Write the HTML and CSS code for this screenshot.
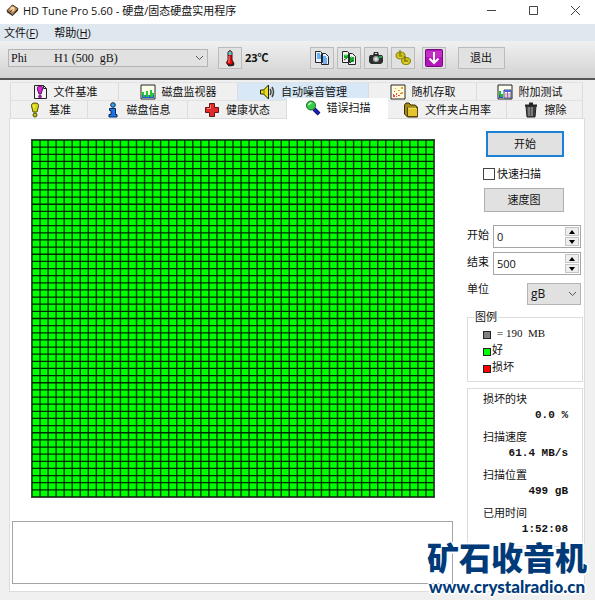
FILE: index.html
```html
<!DOCTYPE html>
<html lang="zh-CN">
<head>
<meta charset="utf-8">
<meta name="viewport" content="width=device-width, initial-scale=1">
<title>HD Tune Pro 5.60</title>
<link rel="stylesheet" href="styles.css">
</head>
<body>
<header class="titlebar">
  <svg class="app-icon" viewBox="0 0 14 14" aria-hidden="true"><path d="M1 7 7 1l6 4-6 7z" fill="#b58a58" stroke="#33261c"/><path d="M1 7v2l6 4 6-6V5l-6 7z" fill="#2c2825"/><circle cx="7" cy="5.500" r="2.500" fill="#ffd9a0"/><path d="m4 9 3-3" stroke="#4a3320"/></svg>
  <h1 class="title">HD Tune Pro 5.60 - 硬盘/固态硬盘实用程序</h1>
  <div class="window-buttons">
    <button type="button" aria-label="最小化"><svg viewBox="0 0 11 11"><path d="M1 5.500h9"/></svg></button>
    <button type="button" aria-label="最大化"><svg viewBox="0 0 11 11"><path d="M1.500 1.500h8v8h-8z"/></svg></button>
    <button type="button" aria-label="关闭"><svg viewBox="0 0 11 11"><path d="m1 1 9 9M10 1l-9 9"/></svg></button>
  </div>
</header>
<nav class="menubar">
  <button type="button">文件(<u>F</u>)</button>
  <button type="button">帮助(<u>H</u>)</button>
</nav>
<div class="toolbar">
  <div class="select drive">
    <select aria-label="驱动器"><option>Phi &nbsp; &nbsp; &nbsp; &nbsp; H1 (500 &nbsp;gB)</option></select>
    <svg class="chevron" viewBox="0 0 9 6" aria-hidden="true"><path d="m1 1 3.500 3.500L8 1"/></svg>
  </div>
  <button class="tool" type="button" aria-label="温度"><svg viewBox="0 0 18 18"><path d="M7 3q2-3 4 0v8q3 3 0 5H7q-3-2 0-5z" fill="#e00808" stroke="#301010"/><path d="M7.500 2.500h3V6h-3z" fill="#43d3dc"/><path d="M8 7v7" stroke="#ff8a8a"/><path d="M12 13.500q2 3-2 3H7" fill="none" stroke="#222" stroke-width="1.500"/></svg></button>
  <output class="temperature">23℃</output>
  <div class="tool-group">
    <button class="tool" type="button" aria-label="复制文本"><svg viewBox="0 0 18 18"><path d="M2.500 2.500h5l2 2v9h-7zM8.500 4.500h4l3 3v8h-7z" fill="#e7f3ff" stroke="#262626"/><path d="M4 5h3M4 7h4M4 9h4M10 8h3M10 10h4M10 12h4" stroke="#3f9dee" stroke-width="1.500"/><path d="M10 14h4" stroke="#345bd2"/></svg></button>
    <button class="tool" type="button" aria-label="复制图像"><svg viewBox="0 0 18 18"><path d="M2.500 2.500h5l2 2v9h-7zM8.500 4.500h4l3 3v8h-7z" fill="#eee" stroke="#262626"/><path d="M4 6h4v3H4zM10 8h4v5h-4z" fill="#17a82c"/><path d="m4 11 3-2M10 14l3-3" stroke="#164e22"/><path d="M5 6h2M11 8h1" stroke="#4ff270" stroke-width="1.500"/></svg></button>
    <button class="tool" type="button" aria-label="截图"><svg viewBox="0 0 18 18"><path d="M3 6h3l1-3h4l1 3h3l1 2v5l-2 2H4l-2-2V8z" fill="#2d302f"/><path d="M8 4h2v1H8z" fill="#eee"/><circle cx="9" cy="10" r="3" fill="#a8aeab"/><circle cx="9" cy="10" r="1.500" fill="#dfe5e2"/><path d="M12 7h3v2h-3z" fill="#20a546"/></svg></button>
    <button class="tool" type="button" aria-label="选项"><svg viewBox="0 0 18 18"><ellipse cx="6.500" cy="6.500" rx="4.500" ry="3.500" fill="#cdc114" stroke="#8a8010"/><ellipse cx="12" cy="12" rx="4.500" ry="3.500" fill="#cdc114" stroke="#8a8010"/><path d="M6 1v5M11 7v5" stroke="#6b6209"/><path d="M4 8h4M10 14h4" stroke="#eee34b"/><path d="M5 7h3M10 12h4" stroke="#6b6209"/></svg></button>
  </div>
  <button class="tool" type="button" aria-label="保存"><svg viewBox="0 0 18 18"><rect x=".5" y=".5" width="17" height="17" rx="1" fill="#b216b8" stroke="#790783"/><path d="M1 2h16v6H1z" fill="#cf48d1" opacity=".5"/><path d="M9 3v11M4.500 9.500 9 14l4.500-4.500" fill="none" stroke="#fff" stroke-width="2"/></svg></button>
  <button class="tool exit" type="button">退出</button>
</div>
<main class="window-body">
  <div class="tabs" role="tablist">
    <div class="tab-row upper">
      <button type="button" role="tab"><svg viewBox="0 0 16 16"><path d="M2.500 1.500h9l3 3v10h-12z" fill="#f5f5f5" stroke="#222"/><path d="M11.500 1.500v3h3" fill="none" stroke="#222"/><path d="M8 2q4 0 2 5L9 10H7L6 7Q4 2 8 2z" fill="#dc24dc" stroke="#55105a"/><circle cx="8" cy="12.500" r="1.500" fill="#b010b5" stroke="#401040" stroke-width=".5"/></svg>文件基准</button>
      <button type="button" role="tab"><svg viewBox="0 0 16 16"><path d="M1 1h14v14H1z" fill="#fbffe8" stroke="#272727"/><path d="M2 14V8h2v3h2V7h2v4h2V6h2v3h2v5z" fill="#24c932"/><path d="M2 14v-3h1v2h2v-2h1v2h3v-2h1v2h3v-2h1v3z" fill="#245be0"/></svg>磁盘监视器</button>
      <button class="hover" type="button" role="tab"><svg viewBox="0 0 16 16"><path d="M1.500 6h3l5-5v14l-5-5h-3z" fill="#e9df21" stroke="#262400"/><path d="M5 6v4" stroke="#7f7611"/><path d="M11 5q2 3 0 6M13 3q3 5 0 10" fill="none" stroke="#444" stroke-width="1.500"/></svg>自动噪音管理</button>
      <button type="button" role="tab"><svg viewBox="0 0 16 16"><path d="M1 1h14v14H1z" fill="#fffadb" stroke="#292929"/><path d="M3 11h2v2H3zM6 9h1v2H6zM8 11h2v1H8zM4 7h1v1H4z" fill="#e94b37"/><path d="M8 6h2v1H8zM11 3h2v2h-2zM11 8h2v2h-2zM5 4h1v1H5z" fill="#e5a628"/><path d="M3 10h1v1H3zM6 12h1v1H6zM10 9h1v1h-1z" fill="#c056c4"/></svg>随机存取</button>
      <button type="button" role="tab"><svg viewBox="0 0 16 16"><path d="M1 1h14v14H1z" fill="#f8fff0" stroke="#222"/><path d="M2 14V7h2v3h2v4z" fill="#20bd38"/><path d="M2 14v-3h1v2h3v1z" fill="#244be0"/><path d="M7 6h7v8H7z" fill="#fff" stroke="#41406e"/><path d="M7 6h7v2H7z" fill="#5263d8"/><path d="M8 10h5M8 12h5" stroke="#d57a9f"/><path d="M10.500 8v6" stroke="#8875b0"/></svg>附加测试</button>
    </div>
    <div class="tab-row lower">
      <button type="button" role="tab"><svg viewBox="0 0 16 16"><path d="M8 1q5 0 3 5l-1 4H6L5 6Q3 1 8 1z" fill="#d8d51d" stroke="#4e4c06"/><path d="M7 3v3" stroke="#fff88b"/><circle cx="8" cy="13" r="2" fill="#c6c112" stroke="#4e4c06"/></svg>基准</button>
      <button type="button" role="tab"><svg viewBox="0 0 16 16"><circle cx="8" cy="3" r="2.300" fill="#2da8e8" stroke="#102a50"/><path d="M4.500 6.500h6v6H12v2.500H4v-2.500h2v-4H4.500z" fill="#1680ef" stroke="#0c2453"/><path d="M8 8v6" stroke="#1a6fe8" stroke-width="2"/></svg>磁盘信息</button>
      <button type="button" role="tab"><svg viewBox="0 0 16 16"><path d="M5.500 1.500h5v4h4v5h-4v4h-5v-4h-4v-5h4z" fill="#e12b2b" stroke="#661515"/><path d="M6.500 3v3.500H3" stroke="#ff7b6e" fill="none"/></svg>健康状态</button>
      <button class="active" type="button" role="tab" aria-selected="true"><svg viewBox="0 0 16 16"><path d="m9 9 5 5" stroke="#101060" stroke-width="4"/><path d="m9 9 5 5" stroke="#1722cf" stroke-width="2"/><circle cx="6" cy="5.500" r="4.500" fill="#35ce48" stroke="#245a2b"/><path d="M3.500 5q1-2 3-2" stroke="#bbffc0" stroke-width="1.500" fill="none"/></svg>错误扫描</button>
      <button type="button" role="tab"><svg viewBox="0 0 16 16"><path d="M1.500 3v9l3 3h10V5L12 3H8L6 1H3z" fill="#a68913" stroke="#393006"/><path d="M4.500 5.500h10v9h-10z" fill="#e4c52d" stroke="#574707"/><path d="M5 6h8" stroke="#fff17e"/></svg>文件夹占用率</button>
      <button type="button" role="tab"><svg viewBox="0 0 16 16"><path d="M3 4h10l-1 11H4z" fill="#515151" stroke="#202020"/><path d="M2 3.500h12M6 1.500h4" stroke="#242424" stroke-width="2"/><path d="M6 5v9M9 5v9" stroke="#a8a8a8"/><path d="M11 5v9" stroke="#222"/></svg>擦除</button>
    </div>
  </div>
  <section class="panel" role="tabpanel" aria-label="错误扫描">
    <div class="scan">
      <svg class="block-map" viewBox="0 0 50 50" preserveAspectRatio="none" role="img" aria-label="扫描块">
        <rect width="50" height="50" fill="#00ff00"/>
        <path class="columns" d="M0 25h50"/>
        <path class="rows" d="M25 0v50"/>
      </svg>
      <textarea class="log" aria-label="扫描记录" readonly></textarea>
    </div>
    <aside class="controls">
      <button class="push primary" type="button">开始</button>
      <label class="check"><input type="checkbox">快速扫描</label>
      <button class="push" type="button">速度图</button>
      <div class="range">
        <label for="start">开始</label>
        <div class="spinner"><input id="start" type="text" inputmode="numeric" value="0"><button type="button" aria-label="增加开始值"><svg viewBox="0 0 6 4"><path d="m0 4 3-4 3 4z"/></svg></button><button type="button" aria-label="减少开始值"><svg viewBox="0 0 6 4"><path d="m0 0 3 4 3-4z"/></svg></button></div>
        <label for="end">结束</label>
        <div class="spinner"><input id="end" type="text" inputmode="numeric" value="500"><button type="button" aria-label="增加结束值"><svg viewBox="0 0 6 4"><path d="m0 4 3-4 3 4z"/></svg></button><button type="button" aria-label="减少结束值"><svg viewBox="0 0 6 4"><path d="m0 0 3 4 3-4z"/></svg></button></div>
        <label for="unit">单位</label>
        <div class="select unit"><select id="unit"><option>gB</option></select><svg class="chevron" viewBox="0 0 9 6" aria-hidden="true"><path d="m1 1 3.500 3.500L8 1"/></svg></div>
      </div>
      <fieldset class="legend">
        <legend>图例</legend>
        <ul>
          <li><span class="swatch size"></span><span class="block-size">= 190 &nbsp;MB</span></li>
          <li><span class="swatch good"></span>好</li>
          <li><span class="swatch bad"></span>损坏</li>
        </ul>
      </fieldset>
      <dl class="stats">
        <dt>损坏的块</dt><dd>0.0 %</dd>
        <dt>扫描速度</dt><dd>61.4 MB/s</dd>
        <dt>扫描位置</dt><dd>499 gB</dd>
        <dt>已用时间</dt><dd>1:52:08</dd>
      </dl>
    </aside>
  </section>
</main>
<div class="watermark"><strong>矿石收音机</strong><span>www.crystalradio.cn</span></div>
</body>
</html>
```
FILE: styles.css
```css
* { box-sizing: border-box; }

body {
  margin: 0;
  min-height: 100vh;
  display: flex;
  flex-direction: column;
  position: relative;
  background: #f0f0f0;
  color: #111;
  font: 11px/16px "Open Sans", "Noto Sans CJK SC", sans-serif;
}

button, input, select, textarea { font: inherit; color: inherit; margin: 0; }
button { padding: 0; border: 0; background: none; }
svg { display: block; }

.titlebar { display: flex; align-items: center; height: 24px; padding: 0 14px 3px 6px; background: #fff; }
.app-icon { width: 13px; height: 13px; }
.title { flex: 1; margin: 0 0 0 4px; font-size: 11px; font-weight: 400; }
.window-buttons { display: flex; gap: 31px; }
.window-buttons svg { width: 11px; height: 11px; fill: none; stroke: #444; }

.menubar { display: flex; gap: 16px; height: 17px; padding: 0 4px; background: #dfe7ef; }

.toolbar {
  display: flex;
  align-items: center;
  height: 39px;
  padding: 0 8px 3px;
  border-bottom: 2px solid #555;
  background: linear-gradient(#f0f0f0, #d2d2d2);
}

.select { position: relative; }
.select select {
  display: block;
  width: 100%;
  height: 100%;
  appearance: none;
  border: 1px solid #b4b4b4;
  border-radius: 0;
  background: #e1e1e1;
  padding: 0 14px 0 3px;
}
.chevron { position: absolute; right: 4px; top: 50%; width: 9px; height: 6px; margin-top: -3px; fill: none; stroke: #555; pointer-events: none; }
.drive { flex: 0 1 200px; height: 18px; margin-right: 10px; }
.drive select { font: 12px/16px "Liberation Serif", serif; padding-left: 2px; }

.tool { display: grid; place-items: center; width: 24px; height: 22px; border: 1px solid #bbb; background: #e1e1e1; }
.tool svg { width: 18px; height: 18px; }
.temperature { margin: 0 41px 0 3px; font-weight: 700; }
.tool-group { display: flex; gap: 3px; margin-right: 7px; }
.exit { width: 47px; margin-left: 12px; }

.window-body { flex: 1; display: flex; flex-direction: column; padding: 2px 10px 8px 9px; }
.tabs { padding: 0 2px 0 1px; }
.tab-row { display: grid; height: 18px; }
.upper { grid-template-columns: 109fr 119fr 131fr 108fr 106fr; }
.lower { grid-template-columns: 78fr 100fr 99fr 101fr 119fr 76fr; }
.tab-row button {
  display: flex;
  align-items: center;
  justify-content: center;
  gap: 6px;
  min-width: 0;
  border-right: 1px solid #dcdcdc;
  border-top: 1px solid #e2e2e2;
  white-space: nowrap;
}
.tab-row button:first-child { border-left: 1px solid #dcdcdc; }
.tab-row svg { flex: none; width: 16px; height: 16px; }
.tab-row .hover { background: #d8e8f6; }
.tab-row .active { z-index: 1; height: 21px; margin-top: -2px; padding-bottom: 2px; border: 0; background: #fff; }

.panel {
  flex: 1;
  display: grid;
  grid-template-columns: 1fr 116px;
  column-gap: 14px;
  padding: 12px 1px 7px 2px;
  border: 1px solid #dcdcdc;
  background: #fff;
}

.scan { display: flex; flex-direction: column; padding-top: 8px; }
.block-map { flex: 1 1 0; min-height: 0; margin: 0 18px 23px 19px; border: 1px solid #444; }
.columns, .rows { fill: none; stroke-width: 50; stroke-dasharray: 0.18 0.82; stroke-dashoffset: 0.09; }
.columns { stroke: #003c00; }
.rows { stroke: #002800; }
.log { display: block; width: 100%; height: 63px; padding: 2px; border: 1px solid #a4a4aa; border-radius: 0; background: #fff; resize: none; outline: 0; }

.controls { display: flex; flex-direction: column; }
.push { height: 24px; margin: 0 19px 0 17px; border: 1px solid #adadad; background: #e1e1e1; }
.primary { height: 26px; border: 2px solid #1c80d4; margin-left: 19px; }
.check { display: flex; align-items: center; gap: 2px; height: 16px; margin: 9px 0 6px 16px; }
.check input { appearance: none; width: 12px; height: 12px; border: 1px solid #444; background: #fff; }

.range { display: grid; grid-template-columns: 1fr 88px; row-gap: 4px; margin: 13px 2px 0 0; }
.range label { padding-top: 2px; }
.spinner { display: grid; grid-template-columns: 1fr 14px; grid-template-rows: 1fr 1fr; gap: 1px; height: 23px; padding: 1px; border: 1px solid #a5a5a5; }
.spinner input { grid-row: 1 / 3; width: 100%; min-width: 0; padding: 0 2px; border: 0; background: #fff; outline: 0; }
.spinner button { display: grid; place-items: center; border: 1px solid #c4c4c4; background: #eee; }
.spinner svg { width: 6px; height: 4px; }
.unit { width: 54px; height: 22px; margin-top: 4px; justify-self: end; }
.unit select { font-size: 12px; }

.legend { height: 72px; margin: 5px 0 0; padding: 0 0 0 15px; border: 1px solid #dcdcdc; }
.legend legend { margin-left: -9px; padding: 0 1px; line-height: 14px; }
.legend ul { margin: 0; padding: 0; list-style: none; }
.legend li { display: flex; align-items: center; height: 17px; gap: 1px; }
.swatch { width: 8px; height: 8px; margin-top: 4px; border: 1px solid #222; }
.size { background: #808080; }
.good { background: #00ff00; }
.bad { background: #ff0000; }
.block-size { margin-left: 5px; font: 11px/16px "Liberation Serif", serif; }

.stats { margin: 6px 0 0; padding: 2px 14px 3px 15px; border: 1px solid #dcdcdc; }
.stats dt { line-height: 16px; }
.stats dd { margin: 0 0 6px; text-align: right; font: 700 11px/16px "Liberation Mono", monospace; }

.watermark {
  position: absolute;
  right: 8px;
  bottom: 2px;
  display: flex;
  flex-direction: column;
  align-items: center;
  color: #003a78;
  pointer-events: none;
  text-shadow: 2px 0 #fff, -2px 0 #fff, 0 2px #fff, 0 -2px #fff, 1px 1px #fff, -1px -1px #fff, 1px -1px #fff, -1px 1px #fff;
}
.watermark strong { font: 900 32px/40px "Noto Sans CJK SC", sans-serif; }
.watermark span { font: 900 17px/22px Lato, sans-serif; }
```
